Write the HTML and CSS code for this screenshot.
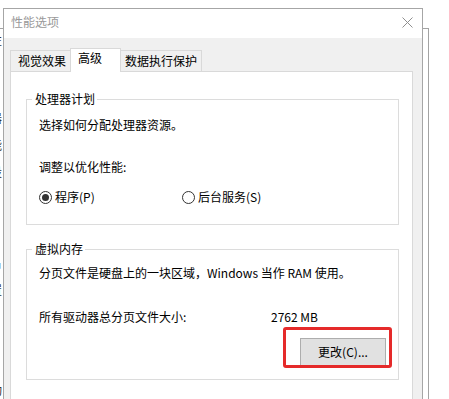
FILE: index.html
```html
<!DOCTYPE html>
<html lang="zh-CN">
<head>
<meta charset="utf-8">
<title>性能选项</title>
<link rel="stylesheet" href="styles.css">
</head>
<body>
<div class="desktop">
  <div class="back-window">
    <div class="frag f1">性</div>
    <div class="frag f2">器</div>
    <div class="frag f3">能</div>
    <div class="frag f4">设</div>
    <div class="frag f5">户</div>
    <div class="frag f6">置</div>
    <div class="frag f7">动</div>
  </div>

  <div class="dialog">
    <div class="titlebar">
      <span class="title">性能选项</span>
      <svg class="close" width="11" height="11" viewBox="0 0 11 11"><path d="M0.5 0.5 L10.5 10.5 M10.5 0.5 L0.5 10.5" stroke="#8f8f8f" stroke-width="1" fill="none"/></svg>
    </div>
    <div class="body">
      <div class="tabs">
        <div class="tab tab-1">视觉效果</div>
        <div class="tab tab-2 selected">高级</div>
        <div class="tab tab-3">数据执行保护</div>
      </div>
      <div class="panel">
        <div class="group group-cpu">
          <span class="legend">处理器计划</span>
          <p class="line">选择如何分配处理器资源。</p>
          <p class="line l-adjust">调整以优化性能:</p>
          <div class="radios">
            <label class="radio r-1"><span class="dot checked"></span>程序(P)</label>
            <label class="radio"><span class="dot"></span>后台服务(S)</label>
          </div>
        </div>
        <div class="group group-vm">
          <span class="legend">虚拟内存</span>
          <p class="line">分页文件是硬盘上的一块区域，Windows 当作 RAM 使用。</p>
          <div class="line size-row"><span class="size-label">所有驱动器总分页文件大小:</span><span>2762 MB</span></div>
          <div class="btn-row">
            <span class="btn-wrap"><button class="btn">更改(C)...</button><span class="highlight"></span></span>
          </div>
        </div>
      </div>
    </div>
  </div>
</div>
</body>
</html>
```

FILE: styles.css
```css
html, body {
  margin: 0;
  padding: 0;
  overflow: hidden;
  background: #ffffff;
}
body {
  width: 449px;
  height: 399px;
  font-family: "Noto Sans CJK SC", "Noto Sans", sans-serif;
  font-size: 12px;
  line-height: 16px;
  color: #000;
}
.desktop {
  position: relative;
  width: 449px;
  height: 399px;
  overflow: hidden;
}
.back-window {
  position: absolute;
  left: -300px;
  top: 28px;
  width: 729px;
  height: 420px;
  box-sizing: border-box;
  border: 1px solid #a3a3a3;
  background: #fff;
  padding-left: 289px;
  color: #333;
}
.frag { height: 16px; }
.f1 { margin-top: 3px; }
.f2 { margin-top: 62px; }
.f3 { margin-top: 11px; }
.f4 { margin-top: 11px; }
.f5 { margin-top: 79px; }
.f6 { margin-top: 7px; }
.f7 { margin-top: 84px; }

.dialog {
  position: absolute;
  left: 3px;
  top: 8px;
  width: 420px;
  height: 440px;
  box-sizing: border-box;
  border: 1px solid #a6a6a6;
  background: #f0f0f0;
  display: flex;
  flex-direction: column;
}
.titlebar {
  height: 29px;
  box-sizing: border-box;
  background: #fff;
  display: flex;
  justify-content: space-between;
  align-items: flex-start;
  padding: 5px 9px 0 7px;
}
.title { color: #999999; }
.close { margin-top: 3px; }

.body {
  padding: 10px 9px 0 6px;
  display: flex;
  flex-direction: column;
}
.tabs {
  display: flex;
  align-items: flex-end;
  height: 23px;
}
.tab {
  box-sizing: border-box;
  height: 21px;
  border: 1px solid #d9d9d9;
  border-bottom: none;
  background: #f0f0f0;
  padding-top: 2px;
  white-space: nowrap;
}
.tab-1 { width: 60px; padding-left: 7px; border-right: none; }
.tab-2 { width: 51px; padding-left: 7px; }
.tab-3 { width: 81px; padding-left: 4px; border-left: none; }
.tab.selected {
  position: relative;
  z-index: 1;
  height: 24px;
  margin-bottom: -1px;
  background: #fff;
  padding-top: 1px;
}

.panel {
  height: 340px;
  box-sizing: border-box;
  border: 1px solid #d9d9d9;
  background: #fff;
  padding: 0 13px 0 15px;
  display: flex;
  flex-direction: column;
}
.group {
  position: relative;
  border: 1px solid #dcdcdc;
  padding: 0 12px;
}
.group-cpu {
  margin-top: 27px;
  padding-top: 17px;
  padding-bottom: 19px;
}
.group-vm {
  margin-top: 24px;
  padding-top: 15px;
  padding-bottom: 13px;
}
.legend {
  position: absolute;
  top: -9px;
  left: 5px;
  padding: 0 2px 0 3px;
  background: #fff;
}
.line {
  margin: 0;
  height: 16px;
  white-space: nowrap;
}
.l-adjust { margin-top: 26px; }
.radios {
  display: flex;
  margin-top: 14px;
  height: 16px;
  align-items: center;
}
.radio {
  display: flex;
  align-items: center;
  white-space: nowrap;
}
.r-1 { width: 143px; }
.dot {
  width: 13px;
  height: 13px;
  box-sizing: border-box;
  border: 1px solid #333;
  border-radius: 50%;
  margin-right: 3px;
  display: flex;
  align-items: center;
  justify-content: center;
}
.dot.checked::after {
  content: "";
  width: 7px;
  height: 7px;
  border-radius: 50%;
  background: #333;
}
.size-row {
  display: flex;
  margin-top: 28px;
}
.size-label { width: 232px; }
.btn-row {
  display: flex;
  justify-content: flex-end;
  margin-top: 13px;
}
.btn-wrap {
  position: relative;
  display: block;
}
.btn {
  display: block;
  width: 86px;
  height: 28px;
  box-sizing: border-box;
  border: 1px solid #adadad;
  background: #e1e1e1;
  font-family: inherit;
  font-size: 12px;
  line-height: 16px;
  color: #000;
  padding: 0;
}
.highlight {
  position: absolute;
  top: -11px;
  left: -17px;
  right: -6px;
  bottom: -2px;
  border: 3px solid #e52a2a;
  border-radius: 3px;
  pointer-events: none;
}
```
